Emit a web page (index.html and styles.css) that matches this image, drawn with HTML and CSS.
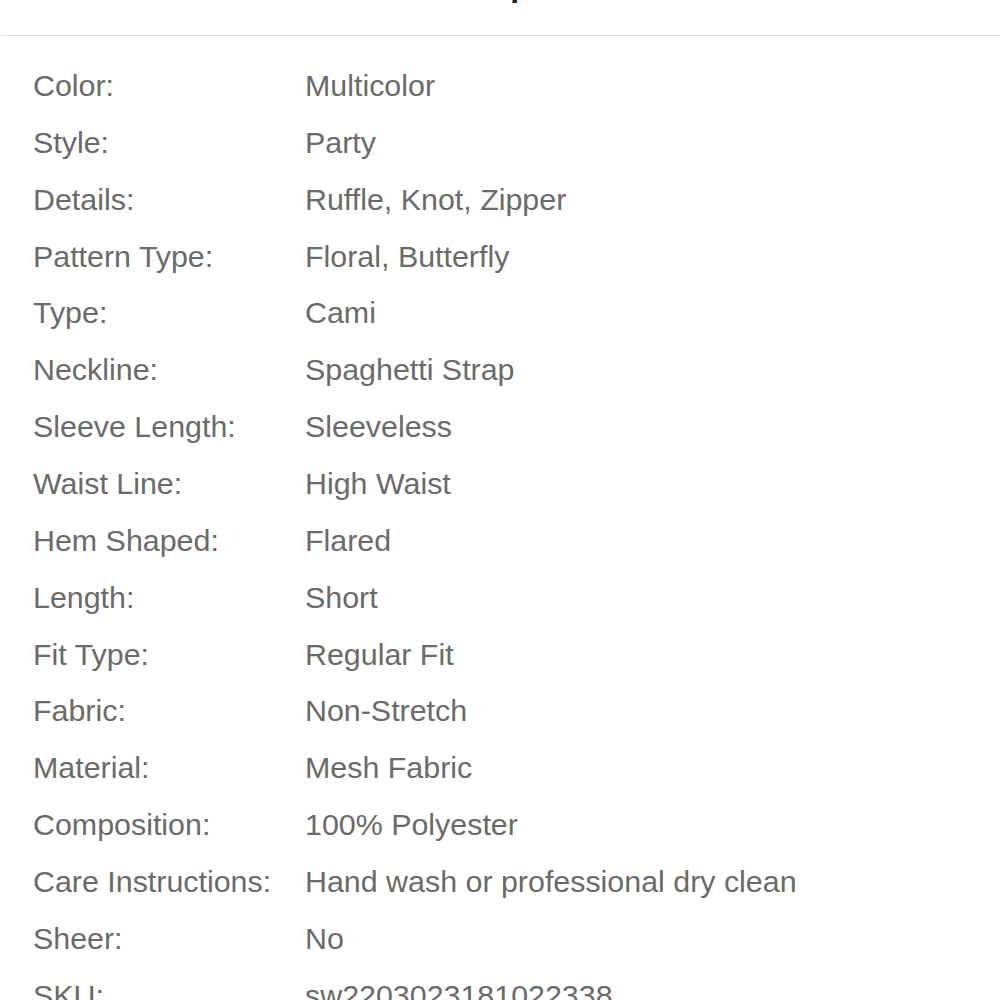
FILE: index.html
```html
<!DOCTYPE html>
<html>
<head>
<meta charset="utf-8">
<link rel="stylesheet" href="styles.css">
</head>
<body>
<header class="head"><h1 class="title">Description</h1></header>
<dl class="specs">
  <dt>Color:</dt><dd>Multicolor</dd>
  <dt>Style:</dt><dd>Party</dd>
  <dt>Details:</dt><dd>Ruffle, Knot, Zipper</dd>
  <dt>Pattern Type:</dt><dd>Floral, Butterfly</dd>
  <dt>Type:</dt><dd>Cami</dd>
  <dt>Neckline:</dt><dd>Spaghetti Strap</dd>
  <dt>Sleeve Length:</dt><dd>Sleeveless</dd>
  <dt>Waist Line:</dt><dd>High Waist</dd>
  <dt>Hem Shaped:</dt><dd>Flared</dd>
  <dt>Length:</dt><dd>Short</dd>
  <dt>Fit Type:</dt><dd>Regular Fit</dd>
  <dt>Fabric:</dt><dd>Non-Stretch</dd>
  <dt>Material:</dt><dd>Mesh Fabric</dd>
  <dt>Composition:</dt><dd>100% Polyester</dd>
  <dt>Care Instructions:</dt><dd>Hand wash or professional dry clean</dd>
  <dt>Sheer:</dt><dd>No</dd>
  <dt>SKU:</dt><dd>sw2203023181022338</dd>
</dl>
</body>
</html>
```
FILE: styles.css
```css
html, body {
  margin: 0;
  padding: 0;
  background: #fff;
  font-family: "Liberation Sans", Arial, sans-serif;
}
body {
  height: 1000px;
  overflow: hidden;
}
.head {
  height: 35px;
  overflow: hidden;
  border-bottom: 1px solid #dedede;
  margin-left: 1px;
}
.title {
  margin: -35px 0 0 0;
  font-size: 32px;
  line-height: 40px;
  font-weight: bold;
  color: #222;
  text-align: center;
}
.specs {
  margin: 0;
  padding: 21px 0 0 33px;
  display: grid;
  grid-template-columns: 272px 1fr;
  grid-auto-rows: 56.87px;
  font-size: 30.4px;
  line-height: 56.87px;
  color: #6a6a6a;
}
.specs dt, .specs dd {
  margin: 0;
  white-space: nowrap;
}
```
